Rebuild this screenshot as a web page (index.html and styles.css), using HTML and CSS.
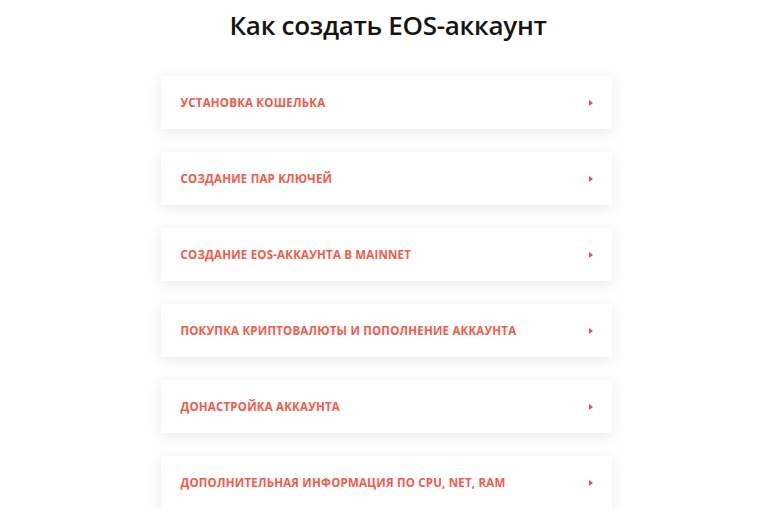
FILE: index.html
```html
<!DOCTYPE html>
<html lang="ru">
<head>
<meta charset="utf-8">
<title>Как создать EOS-аккаунт</title>
<link rel="stylesheet" href="styles.css">
</head>
<body>
<main class="page">
  <h1 class="title">Как создать EOS-аккаунт</h1>
  <ul class="list">
    <li class="item"><span class="label">Установка кошелька</span><span class="arrow"></span></li>
    <li class="item"><span class="label">Создание пар ключей</span><span class="arrow"></span></li>
    <li class="item"><span class="label">Создание EOS-аккаунта в Mainnet</span><span class="arrow"></span></li>
    <li class="item"><span class="label">Покупка криптовалюты и пополнение аккаунта</span><span class="arrow"></span></li>
    <li class="item"><span class="label">Донастройка аккаунта</span><span class="arrow"></span></li>
    <li class="item"><span class="label">Дополнительная информация по CPU, NET, RAM</span><span class="arrow"></span></li>
  </ul>
</main>
</body>
</html>
```

FILE: styles.css
```css
* { box-sizing: border-box; }
html, body { margin: 0; padding: 0; background: #ffffff; }
body { font-family: "Open Sans", "Noto Sans", sans-serif; overflow: hidden; }
.page {
  display: flex;
  flex-direction: column;
  align-items: center;
  padding-top: 5px;
}
.title {
  margin: 0 0 31px 6px;
  font-family: "Open Sans", "Noto Sans", sans-serif;
  font-weight: 600;
  font-size: 26px;
  line-height: 40px;
  color: #141414;
  letter-spacing: -0.3px;
}
.list {
  list-style: none;
  margin: 0;
  padding: 0;
  width: 451px;
  margin-left: 2px;
  display: flex;
  flex-direction: column;
  gap: 23px;
}
.item {
  height: 53px;
  background: #ffffff;
  box-shadow: 0 3px 14px rgba(0, 0, 0, 0.09);
  display: flex;
  align-items: center;
  justify-content: space-between;
  padding: 0 19px 0 20px;
}
.label {
  text-transform: uppercase;
  font-weight: 700;
  font-size: 11.5px;
  letter-spacing: 0.2px;
  color: #f25a4a;
}
.arrow {
  width: 0;
  height: 0;
  border-top: 3.5px solid transparent;
  border-bottom: 3.5px solid transparent;
  border-left: 4px solid #f0485a;
}
```
